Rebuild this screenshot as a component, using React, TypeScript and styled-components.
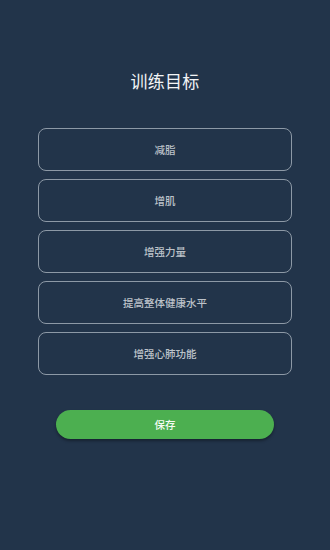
import React from "react";
import styled, { createGlobalStyle } from "styled-components";

const Global = createGlobalStyle`
  html, body {
    margin: 0;
    padding: 0;
    background: #22344a;
  }
  body {
    font-family: "Noto Sans CJK SC", "Noto Sans", sans-serif;
  }
`;

const Page = styled.div`
  width: 330px;
  height: 550px;
  background: #22344a;
  display: flex;
  flex-direction: column;
  align-items: center;
  padding-top: 69px;
  box-sizing: border-box;
`;

const Title = styled.h1`
  margin: 0 0 35px;
  font-size: 17px;
  line-height: 24px;
  font-weight: 400;
  color: #f2f4f6;
  letter-spacing: 0.3px;
`;

const List = styled.div`
  display: flex;
  flex-direction: column;
  gap: 8px;
  width: 254px;
`;

const Option = styled.div`
  height: 43px;
  box-sizing: border-box;
  border: 1px solid #8d99a6;
  border-radius: 8px;
  display: flex;
  align-items: center;
  justify-content: center;
  font-size: 10.5px;
  font-weight: 500;
  color: #bcc2c9;
`;

const SaveButton = styled.button`
  margin-top: 35px;
  width: 218px;
  height: 29px;
  border: none;
  border-radius: 15px;
  background: #4caf50;
  color: #f4fbf4;
  font-family: "Noto Sans CJK SC", "Noto Sans", sans-serif;
  font-size: 10.5px;
  font-weight: 500;
  box-shadow: 0 2px 3px rgba(0, 0, 0, 0.35);
  padding: 0;
`;

const options = ["减脂", "增肌", "增强力量", "提高整体健康水平", "增强心肺功能"];

export default function App() {
  return (
    <>
      <Global />
      <Page>
        <Title>训练目标</Title>
        <List>
          {options.map((o) => (
            <Option key={o}>{o}</Option>
          ))}
        </List>
        <SaveButton>保存</SaveButton>
      </Page>
    </>
  );
}
